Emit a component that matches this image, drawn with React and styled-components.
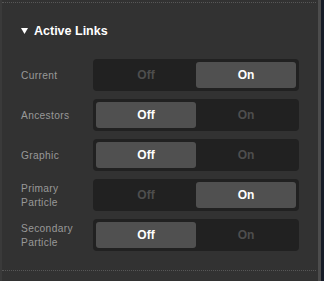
import React, { useState } from "react";
import styled, { createGlobalStyle } from "styled-components";

const Global = createGlobalStyle`
  html, body { margin: 0; padding: 0; background: #323232; }
  body { font-family: "Liberation Sans", Arial, sans-serif; }
`;

const Frame = styled.div`
  width: 324px;
  height: 281px;
  display: flex;
  overflow: hidden;
  background: #323232;
`;

const LeftEdge = styled.div`
  width: 2px;
  background: #3a3a3a;
`;

const Main = styled.div`
  flex: 1;
  padding-top: 2px;
  display: flex;
  flex-direction: column;
`;

const RightStripe = styled.div`
  width: 3px;
  background: #4c4c4c;
`;

const RightDark = styled.div`
  width: 3px;
  background: #161b27;
`;

const Section = styled.section`
  border-top: 1px dotted #575757;
  border-bottom: 1px dotted #575757;
  padding: 20px 0 19px 19px;
  margin-right: 2px;
`;

const Header = styled.div`
  display: flex;
  align-items: center;
  gap: 6px;
  height: 16px;
  color: #fff;
  font-weight: 700;
  font-size: 12.5px;
  margin-bottom: 20px;
`;

const Rows = styled.div`
  display: flex;
  flex-direction: column;
  gap: 8px;
`;

const Row = styled.div`
  display: grid;
  grid-template-columns: 72px 206px;
  align-items: center;
`;

const Label = styled.div`
  color: #999999;
  font-size: 10.2px;
  letter-spacing: 0.35px;
  line-height: 14px;
  padding-top: 2px;
`;

const Segmented = styled.div`
  display: grid;
  grid-template-columns: 1fr 1fr;
  height: 32px;
  box-sizing: border-box;
  padding: 3px;
  background: #212121;
  border-radius: 4px;
`;

const Seg = styled.button`
  border: none;
  margin: 0;
  padding: 0;
  font-family: inherit;
  font-size: 12px;
  font-weight: 700;
  border-radius: 3px;
  cursor: pointer;
  background: ${(p) => (p.$active ? "#505050" : "transparent")};
  color: ${(p) => (p.$active ? "#ffffff" : "#4e4e4e")};
`;

const rowsData = [
  { label: ["Current"], on: true },
  { label: ["Ancestors"], on: false },
  { label: ["Graphic"], on: false },
  { label: ["Primary", "Particle"], on: true },
  { label: ["Secondary", "Particle"], on: false },
];

function Toggle({ initial }) {
  const [on, setOn] = useState(initial);
  return (
    <Segmented>
      <Seg $active={!on} onClick={() => setOn(false)}>Off</Seg>
      <Seg $active={on} onClick={() => setOn(true)}>On</Seg>
    </Segmented>
  );
}

export default function App() {
  return (
    <>
      <Global />
      <Frame>
        <LeftEdge />
        <Main>
          <Section>
            <Header>
              <svg width="7" height="6" viewBox="0 0 7 6">
                <polygon points="0,0 7,0 3.5,6" fill="#fff" />
              </svg>
              Active Links
            </Header>
            <Rows>
              {rowsData.map((r, i) => (
                <Row key={i}>
                  <Label>
                    {r.label.map((l, j) => (
                      <div key={j}>{l}</div>
                    ))}
                  </Label>
                  <Toggle initial={r.on} />
                </Row>
              ))}
            </Rows>
          </Section>
        </Main>
        <RightStripe />
        <RightDark />
      </Frame>
    </>
  );
}
